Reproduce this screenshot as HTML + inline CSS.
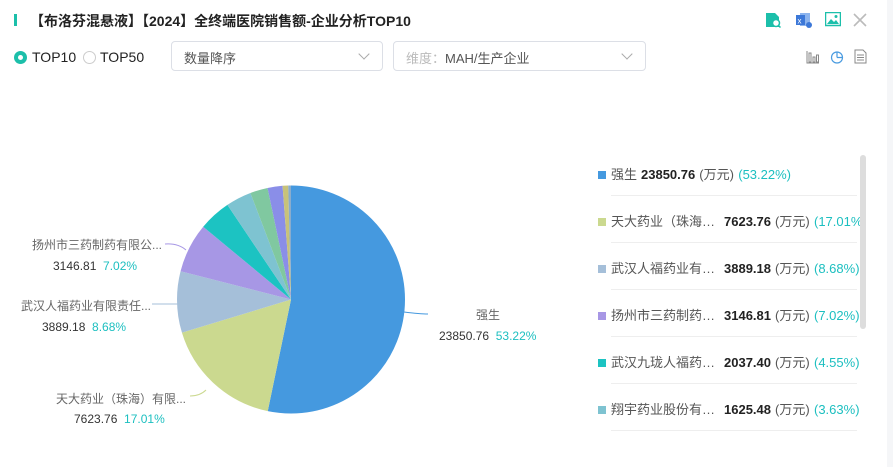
<!DOCTYPE html>
<html><head><meta charset="utf-8"><style>
*{margin:0;padding:0;box-sizing:border-box}
body{width:893px;height:467px;background:#fff;font-family:"Liberation Sans","Noto Sans CJK SC",sans-serif;position:relative;overflow:hidden;color:#333}
.a{position:absolute;white-space:nowrap}
.t{font-size:14px;font-weight:bold;color:#222}
.sel{position:absolute;border:1px solid #dcdfe6;border-radius:4px;height:30px;font-size:13px;color:#555;padding:6px 12px;white-space:nowrap}
.chev{position:absolute;right:14px;top:8px;width:8px;height:8px;border-right:1px solid #aaa;border-bottom:1px solid #aaa;transform:rotate(45deg)}
.lg{position:absolute;left:598px;width:280px;font-size:13px;color:#555;line-height:20px;height:20px;white-space:nowrap}
.lg i{position:absolute;left:0;top:6px;width:8px;height:8px}
.lg span{display:inline-block;vertical-align:top;height:20px;line-height:20px}
.lg .n{margin-left:13px;width:104px;overflow:hidden}
.lg .v{width:56px;text-align:right;color:#222;font-weight:bold}
.lg .u{margin-left:4px;width:39px}
.lg .p{color:#1cbfc0}
.hr{position:absolute;left:611px;width:246px;height:1px;background:#eee}
.lbl{font-size:12px;color:#666}
.num{font-size:12px;color:#333}
.pc{color:#1cbfc0}
</style></head><body>
<div class="a" style="left:14px;top:14px;width:3px;height:12px;background:#1cbfaa"></div>
<div class="a t" style="left:30px;top:11px">【布洛芬混悬液】【2024】全终端医院销售额-企业分析TOP10</div>
<svg class="a" style="left:765px;top:12px" width="16" height="16"><path d="M1 1h9l4 4v10H1z" fill="#1cbfaa"/><circle cx="11" cy="11" r="3.5" fill="#fff" stroke="#1cbfaa" stroke-width="1.5"/><path d="M13.5 13.5l2 2" stroke="#1cbfaa" stroke-width="1.5"/></svg>
<svg class="a" style="left:795px;top:12px" width="18" height="17"><rect x="5" y="1" width="10" height="13" fill="#8cb4ee"/><rect x="1" y="3" width="9" height="10" fill="#3c78d8"/><text x="2.5" y="11.5" font-size="8" fill="#fff" font-family="Liberation Sans">x</text><circle cx="14" cy="13" r="3" fill="#3c78d8"/></svg>
<svg class="a" style="left:825px;top:12px" width="16" height="15"><rect x="0.5" y="0.5" width="15" height="13" fill="none" stroke="#1cbfaa" stroke-width="1.5"/><path d="M2 12l4-5 3 3 2-2 3 4z" fill="#1cbfaa"/><circle cx="11" cy="4.5" r="1.5" fill="#1cbfaa"/></svg>
<svg class="a" style="left:853px;top:13px" width="14" height="14"><path d="M1 1l12 12M13 1L1 13" stroke="#bbb" stroke-width="1.6"/></svg>
<div class="a" style="left:14px;top:51px;width:13px;height:13px;border-radius:50%;background:#1cbfaa"><div style="position:absolute;left:4px;top:4px;width:5px;height:5px;border-radius:50%;background:#fff"></div></div>
<div class="a" style="left:32px;top:49px;font-size:14px;color:#222">TOP10</div>
<div class="a" style="left:83px;top:51px;width:13px;height:13px;border-radius:50%;border:1px solid #ccc"></div>
<div class="a" style="left:100px;top:49px;font-size:14px;color:#222">TOP50</div>
<div class="sel" style="left:171px;top:41px;width:212px">数量降序<div class="chev"></div></div>
<div class="sel" style="left:393px;top:41px;width:253px"><span style="color:#bbb">维度：</span>MAH/生产企业<div class="chev"></div></div>
<svg class="a" style="left:806px;top:50px" width="14" height="14"><path d="M1 1v12h12" stroke="#888" fill="none"/><rect x="3" y="3" width="2" height="9" fill="none" stroke="#888"/><rect x="7" y="7" width="2" height="5" fill="none" stroke="#888"/><rect x="10.5" y="5" width="2" height="7" fill="none" stroke="#888"/></svg>
<svg class="a" style="left:830px;top:50px" width="14" height="14"><circle cx="7" cy="7.5" r="5.5" fill="none" stroke="#4a9be0" stroke-width="1.2"/><path d="M7 7.5V2M7 7.5h5.5" stroke="#4a9be0" stroke-width="1.2"/></svg>
<svg class="a" style="left:854px;top:49px" width="13" height="15"><path d="M1 1h8l3 3v10H1z" fill="none" stroke="#888"/><path d="M3 6h7M3 8.5h7M3 11h7" stroke="#888"/></svg>
<svg class="a" style="left:0;top:0" width="580" height="467">
<g transform="rotate(-90 291 299.5)" fill="none" stroke-width="114">
<circle cx="291" cy="299.5" r="57" stroke="#4599df" stroke-dasharray="190.6 400" stroke-dashoffset="0"/>
<circle cx="291" cy="299.5" r="57" stroke="#cbd98f" stroke-dasharray="60.92 400" stroke-dashoffset="-190.6"/>
<circle cx="291" cy="299.5" r="57" stroke="#a5bfd9" stroke-dasharray="31.09 400" stroke-dashoffset="-251.52"/>
<circle cx="291" cy="299.5" r="57" stroke="#a797e5" stroke-dasharray="25.14 400" stroke-dashoffset="-282.61"/>
<circle cx="291" cy="299.5" r="57" stroke="#1cc3c2" stroke-dasharray="16.3 400" stroke-dashoffset="-307.75"/>
<circle cx="291" cy="299.5" r="57" stroke="#7ec3d1" stroke-dasharray="13 400" stroke-dashoffset="-324.05"/>
<circle cx="291" cy="299.5" r="57" stroke="#80c8a0" stroke-dasharray="8.92 400" stroke-dashoffset="-337.05"/>
<circle cx="291" cy="299.5" r="57" stroke="#8a8ee8" stroke-dasharray="7.52 400" stroke-dashoffset="-345.97"/>
<circle cx="291" cy="299.5" r="57" stroke="#c8c27a" stroke-dasharray="2.87 400" stroke-dashoffset="-353.49"/>
<circle cx="291" cy="299.5" r="57" stroke="#8aaccc" stroke-dasharray="1.78 400" stroke-dashoffset="-356.36"/>
</g>
<path d="M404 312 Q420 314 428 314" stroke="#4599df" fill="none"/>
<path d="M165 244 Q178 243 186 250" stroke="#a797e5" fill="none"/>
<path d="M152 304h26" stroke="#a5bfd9" fill="none"/>
<path d="M190 396 Q200 396 206 390" stroke="#cbd98f" fill="none"/>
</svg>
<div class="a lbl" style="left:476px;top:306px">强生</div>
<div class="a num" style="left:439px;top:329px">23850.76 <span class="pc">&nbsp;53.22%</span></div>
<div class="a lbl" style="left:32px;top:236px">扬州市三药制药有限公...</div>
<div class="a num" style="left:53px;top:259px">3146.81 <span class="pc">&nbsp;7.02%</span></div>
<div class="a lbl" style="left:21px;top:297px">武汉人福药业有限责任...</div>
<div class="a num" style="left:42px;top:320px">3889.18 <span class="pc">&nbsp;8.68%</span></div>
<div class="a lbl" style="left:56px;top:390px">天大药业（珠海）有限...</div>
<div class="a num" style="left:74px;top:412px">7623.76 <span class="pc">&nbsp;17.01%</span></div>
<div class="lg" style="top:165px"><i style="background:#4599df"></i><span class="n" style="width:30px">强生</span><span class="v" style="width:auto">23850.76</span><span class="u">(万元)</span><span class="p">(53.22%)</span></div>
<div class="hr" style="top:195px"></div>
<div class="lg" style="top:212px"><i style="background:#cbd98f"></i><span class="n">天大药业（珠海…</span><span class="v">7623.76</span><span class="u">(万元)</span><span class="p">(17.01%)</span></div>
<div class="hr" style="top:242px"></div>
<div class="lg" style="top:259px"><i style="background:#a5bfd9"></i><span class="n">武汉人福药业有…</span><span class="v">3889.18</span><span class="u">(万元)</span><span class="p">(8.68%)</span></div>
<div class="hr" style="top:289px"></div>
<div class="lg" style="top:306px"><i style="background:#a797e5"></i><span class="n">扬州市三药制药…</span><span class="v">3146.81</span><span class="u">(万元)</span><span class="p">(7.02%)</span></div>
<div class="hr" style="top:336px"></div>
<div class="lg" style="top:353px"><i style="background:#1cc3c2"></i><span class="n">武汉九珑人福药…</span><span class="v">2037.40</span><span class="u">(万元)</span><span class="p">(4.55%)</span></div>
<div class="hr" style="top:383px"></div>
<div class="lg" style="top:400px"><i style="background:#7ec3d1"></i><span class="n">翔宇药业股份有…</span><span class="v">1625.48</span><span class="u">(万元)</span><span class="p">(3.63%)</span></div>
<div class="hr" style="top:430px"></div>
<div class="a" style="left:860px;top:155px;width:6px;height:174px;border-radius:3px;background:#ddd"></div>
<div class="a" style="left:887px;top:0;width:6px;height:467px;background:#f5f6f8"></div>
</body></html>
